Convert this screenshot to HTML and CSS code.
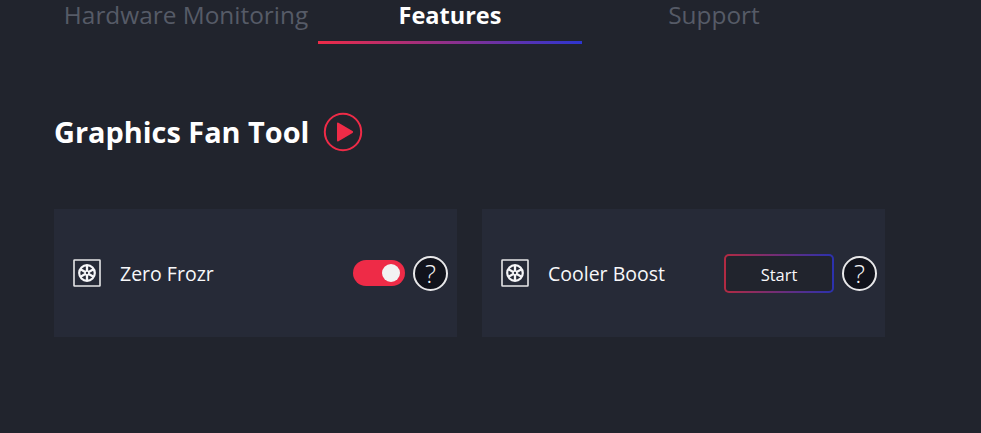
FILE: index.html
```html
<!DOCTYPE html>
<html lang="en">
<head>
<meta charset="utf-8">
<title>Graphics Fan Tool</title>
<link rel="stylesheet" href="styles.css">
</head>
<body>
<svg class="defs" width="0" height="0" aria-hidden="true">
  <symbol id="fan" viewBox="0 0 28 28">
    <rect x="1" y="1" width="26" height="26" rx="0.5" fill="none" stroke="#e6e6e8" stroke-width="1.6"/>
    <circle cx="14" cy="14" r="7.8" fill="none" stroke="#f6f6f8" stroke-width="2.2"/>
    <circle cx="14" cy="14" r="1.9" fill="none" stroke="#f6f6f8" stroke-width="1.5"/>
    <g stroke="#f6f6f8" stroke-width="2.3">
      <path d="M14 6.5v5.5M14 16v5.5M7.5 10.25l4.8 2.75M15.7 15l4.8 2.75M20.5 10.25l-4.8 2.75M12.3 15l-4.8 2.75"/>
    </g>
  </symbol>
</svg>
<nav class="tabs">
  <div class="tab">Hardware Monitoring</div>
  <div class="tab active">Features</div>
  <div class="tab">Support</div>
</nav>
<section class="heading">
  <h1>Graphics Fan Tool</h1>
  <svg class="play" width="40" height="40" viewBox="0 0 40 40">
    <circle cx="20" cy="20" r="18.2" fill="none" stroke="#ee2b47" stroke-width="2"/>
    <path d="M14 11.5a1 1 0 0 1 1.5-.8l14 8.4a1 1 0 0 1 0 1.8l-14 8.4a1 1 0 0 1-1.5-.8z" fill="#ee2b47"/>
  </svg>
</section>
<section class="cards">
  <div class="card">
    <svg class="fan" width="28" height="28"><use href="#fan"/></svg>
    <span class="label">Zero Frozr</span>
    <span class="toggle"><span class="knob"></span></span>
    <span class="help">?</span>
  </div>
  <div class="card">
    <svg class="fan" width="28" height="28"><use href="#fan"/></svg>
    <span class="label">Cooler Boost</span>
    <button class="start">Start</button>
    <span class="help">?</span>
  </div>
</section>
</body>
</html>
```
FILE: styles.css
```css
* { box-sizing: border-box; }
html, body { height: 100%; }
body {
  margin: 0;
  padding: 0 0 0 54px;
  background: #21242d;
  color: #fff;
  font-family: "Open Sans", "Noto Sans", sans-serif;
  overflow: hidden;
}
.defs { position: absolute; }
.tabs {
  display: flex;
  width: 792px;
  height: 44px;
}
.tab {
  width: 264px;
  height: 44px;
  text-align: center;
  font-size: 24.4px;
  line-height: 30px;
  color: #565b67;
}
.tab.active {
  color: #fff;
  font-size: 23.5px;
  font-weight: 700;
  position: relative;
}
.tab.active::after {
  content: "";
  position: absolute;
  left: 0;
  right: 0;
  bottom: 0;
  height: 3px;
  background: linear-gradient(90deg, #ee2b47, #2d35d0);
}
.heading {
  display: flex;
  align-items: center;
  gap: 14px;
  height: 40px;
  margin-top: 68px;
}
h1 {
  margin: 0;
  font-size: 28.9px;
  font-weight: 700;
  line-height: 40px;
}
.cards {
  display: flex;
  gap: 25px;
  margin-top: 57px;
}
.card {
  display: flex;
  align-items: center;
  width: 403px;
  height: 128px;
  padding: 0 9px 0 19px;
  background: #262a37;
}
.card + .card { padding-right: 8px; }
.label {
  margin-left: 19px;
  flex: 1;
  font-size: 19.5px;
  color: #f8f8fa;
}
.toggle {
  display: flex;
  align-items: center;
  justify-content: flex-end;
  width: 52px;
  height: 26px;
  margin-right: 8px;
  padding-right: 5px;
  border-radius: 13px;
  background: #ee2b47;
}
.knob {
  width: 18px;
  height: 18px;
  border-radius: 50%;
  background: #f2f2f2;
}
.help {
  display: flex;
  align-items: center;
  justify-content: center;
  width: 35px;
  height: 35px;
  border: 2px solid #e8e8ea;
  border-radius: 50%;
  background: #11131c;
  font-size: 26px;
  font-weight: 300;
  line-height: 1;
  color: #f2f2f4;
}
.start {
  width: 110px;
  height: 39px;
  margin-right: 8px;
  padding: 2px 0 0;
  border: 2px solid transparent;
  border-radius: 5px;
  background:
    linear-gradient(#21242d, #21242d) padding-box,
    linear-gradient(90deg, rgba(238, 43, 71, 0.7), rgba(45, 53, 225, 0.7)) border-box;
  color: #f8f8fa;
  font-family: inherit;
  font-size: 16.5px;
}
```
